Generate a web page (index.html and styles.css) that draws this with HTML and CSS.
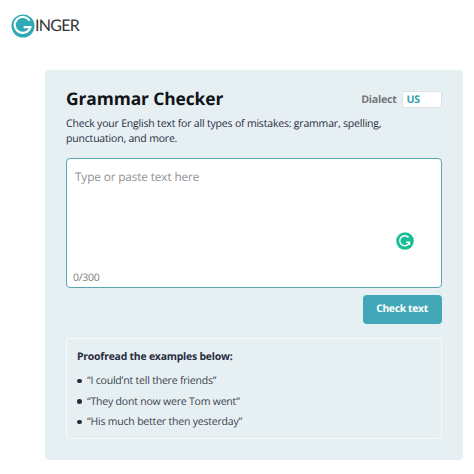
FILE: index.html
```html
<!DOCTYPE html>
<html lang="en">
<head>
<meta charset="utf-8">
<title>Ginger Grammar Checker</title>
<link rel="stylesheet" href="styles.css">
</head>
<body>
<header class="logo">
  <svg class="logo-mark" viewBox="0 0 24 24" aria-hidden="true">
    <circle cx="12" cy="12" r="11.5" fill="#2fa9b5"/>
    <path d="M18.6 6.8A8 8 0 1 0 19.4 13.1H12.6" fill="none" stroke="#fff" stroke-width="2.1"/>
  </svg>
  <span class="logo-text">INGER</span>
</header>
<main class="panel">
  <div class="heading">
    <h1>Grammar Checker</h1>
    <div class="dialect"><span>Dialect</span><span class="select">US</span></div>
  </div>
  <p class="intro">Check your English text for all types of mistakes: grammar, spelling,<br>punctuation, and more.</p>
  <section class="editor">
    <div class="placeholder">Type or paste text here</div>
    <div class="count">0/300</div>
    <svg class="badge" viewBox="0 0 18 18" aria-hidden="true">
      <circle cx="9" cy="9" r="8.8" fill="#17bd94"/>
      <path d="M12.6 5.5A5 5 0 1 0 13.5 10.2H10M13.5 9.6V13" fill="none" stroke="#fff" stroke-width="1.4"/>
    </svg>
  </section>
  <button class="check">Check text</button>
  <section class="examples">
    <h2>Proofread the examples below:</h2>
    <ul>
      <li>“I could’nt tell there friends”</li>
      <li>“They dont now were Tom went”</li>
      <li>“His much better then yesterday”</li>
    </ul>
  </section>
</main>
</body>
</html>
```
FILE: styles.css
```css
* { box-sizing: border-box; }
body {
  margin: 0;
  height: 474px;
  background: #fff;
  font-family: "Open Sans", sans-serif;
  text-rendering: geometricPrecision;
  color: #272c42;
  overflow: hidden;
}
h1, h2, p, ul { margin: 0; padding: 0; }
.logo {
  display: flex;
  align-items: center;
  height: 70px;
  padding: 0 0 19px 11px;
}
.logo-mark { width: 24px; height: 24px; }
.logo-text {
  font: 16px/24px Lato, sans-serif;
  letter-spacing: -0.7px;
  color: #333;
}
.panel {
  display: flex;
  flex-direction: column;
  width: 418.5px;
  height: 390px;
  margin-left: 44.5px;
  padding: 18px 21.5px 0;
  border-radius: 4px;
  background: #e6eff1;
}
.heading { display: flex; justify-content: space-between; height: 26px; }
h1 { font-size: 17.4px; line-height: 22px; letter-spacing: -0.1px; color: #111318; white-space: nowrap; }
.dialect {
  display: flex;
  gap: 5px;
  padding-top: 3px;
  font-size: 10.6px;
  font-weight: 700;
  line-height: 18px;
  letter-spacing: -0.25px;
  color: #74777b;
}
.select {
  width: 40px;
  height: 17px;
  padding-left: 4px;
  border: 1px solid #dfe2e3;
  border-radius: 2px;
  background: #fff;
  line-height: 17px;
  color: #36a0ac;
}
.intro { height: 44px; padding-top: 3px; font-size: 10.5px; line-height: 15px; letter-spacing: -0.19px; white-space: nowrap; }
.editor {
  position: relative;
  display: flex;
  flex-direction: column;
  justify-content: space-between;
  height: 130px;
  padding: 10px 6px 0;
  border: 1px solid #56a9b0;
  border-radius: 4px;
  background: #fff;
}
.placeholder { padding-left: 2px; font-size: 11.8px; line-height: 17px; letter-spacing: -0.13px; color: #929292; }
.count { font-size: 10.4px; line-height: 18px; letter-spacing: -0.2px; color: #777; }
.badge { position: absolute; width: 18px; height: 18px; right: 27px; top: 73px; }
.check {
  align-self: flex-end;
  width: 79px;
  height: 29px;
  margin-top: 7px;
  padding: 0;
  border: 0;
  border-radius: 4px;
  background: #42a8b7;
  font: 700 10.3px/29px "Open Sans", sans-serif;
  text-rendering: geometricPrecision;
  letter-spacing: -0.3px;
  color: #fff;
}
.examples {
  height: 101px;
  margin-top: 14px;
  padding: 10px;
  border: 1px solid #f6fafb;
  border-radius: 3px;
}
h2 { margin-bottom: 5px; font-size: 10.4px; line-height: 17px; letter-spacing: -0.2px; }
ul { list-style: none; }
li { display: flex; align-items: center; height: 20.4px; font-size: 10.5px; letter-spacing: -0.2px; color: #3a3f50; }
li::before { content: ""; width: 4.5px; height: 4.5px; margin-right: 5.5px; border-radius: 50%; background: #272c36; }
```
